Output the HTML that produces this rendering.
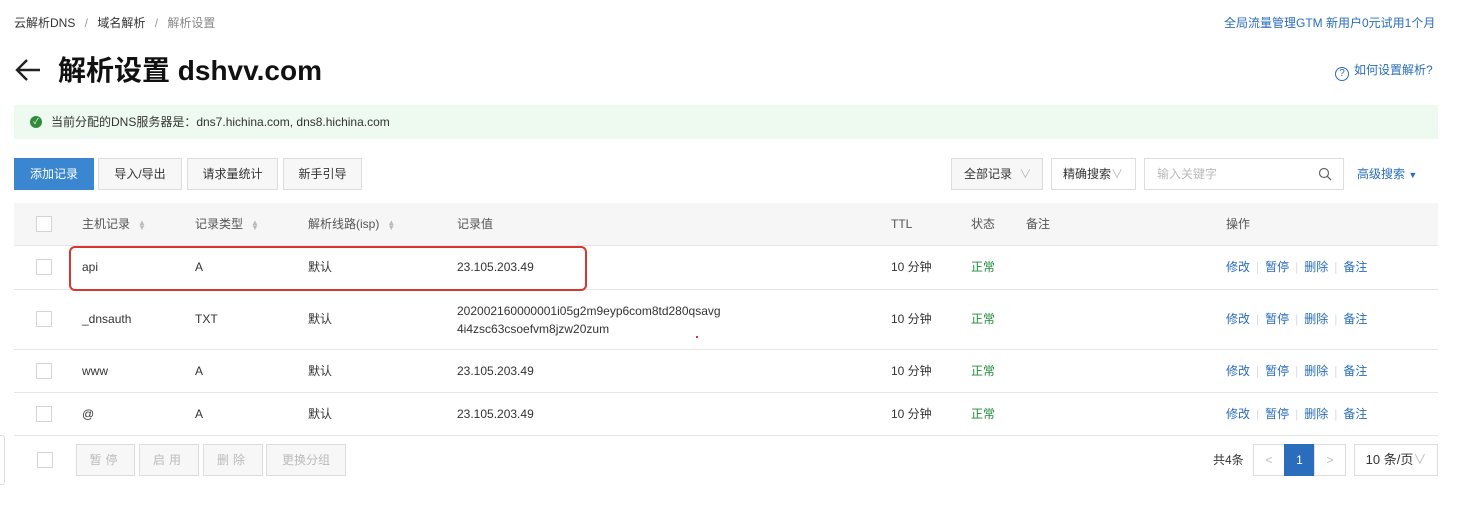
<!DOCTYPE html>
<html><head><meta charset="utf-8"><style>
*{margin:0;padding:0;box-sizing:border-box}
body{width:1461px;height:511px;background:#fff;position:relative;overflow:hidden;font-family:"Liberation Sans","Noto Sans CJK SC",sans-serif;font-size:12px;color:#333}
.a{position:absolute;white-space:nowrap;line-height:16px}
.blue{color:#2a6dbd}
.btn{position:absolute;border:1px solid #ddd;background:#f7f7f7;height:32px;line-height:30px;text-align:center;font-size:12px;color:#333}
.cb{position:absolute;width:16px;height:16px;border:1px solid #d5d5d5;background:#fff}
.line{position:absolute;left:14px;width:1424px;height:1px;background:#e5e5e5}
.t{position:absolute;font-size:12px;color:#333;white-space:nowrap;line-height:16px}
.g{color:#1f8c38}
.ops{position:absolute;left:1226px;color:#2a6dbd;font-size:12px;white-space:nowrap;line-height:16px}
.ops i{font-style:normal;color:#ddd;margin:0 6px}
.sort{display:inline-block;margin-left:8px;color:#bbb;font-size:8px;line-height:5px;vertical-align:middle}
</style></head><body>
<div class="a" style="left:14px;top:15px;color:#333">云解析DNS <span style="color:#999;margin:0 6px">/</span> 域名解析 <span style="color:#999;margin:0 6px">/</span> <span style="color:#888">解析设置</span></div>
<div class="a blue" style="left:1224px;top:15px">全局流量管理GTM 新用户0元试用1个月</div>
<svg class="a" style="left:14px;top:57px" width="28" height="26" viewBox="0 0 28 26"><path d="M26 13H3M13 3L3 13l10 10" fill="none" stroke="#222" stroke-width="2.4"/></svg>
<div class="a" style="left:58px;top:54px;font-size:28px;line-height:34px;font-weight:bold;color:#111">解析设置 dshvv.com</div>
<div class="a blue" style="left:1335px;top:62px"><span style="display:inline-block;width:14px;height:14px;border:1px solid #2a6dbd;border-radius:50%;font-size:10px;line-height:12px;text-align:center;margin-right:5px;vertical-align:-2px">?</span>如何设置解析?</div>
<div class="a" style="left:14px;top:105px;width:1424px;height:34px;background:#eefaef"></div>
<div class="a" style="left:30px;top:116px;width:12px;height:12px;border-radius:50%;background:#2f8a3a;color:#fff;font-size:8px;line-height:12px;text-align:center">✓</div>
<div class="a" style="left:51px;top:114px;color:#333">当前分配的DNS服务器是：dns7.hichina.com, dns8.hichina.com</div>
<div class="btn" style="left:14px;top:158px;width:80px;background:#3a86d0;border-color:#3a86d0;color:#fff">添加记录</div>
<div class="btn" style="left:98px;top:158px;width:84px">导入/导出</div>
<div class="btn" style="left:187px;top:158px;width:91px">请求量统计</div>
<div class="btn" style="left:283px;top:158px;width:79px">新手引导</div>
<div class="btn" style="left:951px;top:158px;width:92px;text-align:left;padding-left:12px">全部记录 <span style="color:#bbb;margin-left:4px">∨</span></div>
<div class="btn" style="left:1051px;top:158px;width:85px;background:#fff;text-align:left;padding-left:11px">精确搜索<span style="color:#bbb">∨</span></div>
<div class="btn" style="left:1144px;top:158px;width:200px;background:#fff;text-align:left;padding-left:12px;color:#bbb">输入关键字</div>
<svg class="a" style="left:1318px;top:167px" width="14" height="14" viewBox="0 0 14 14"><circle cx="6" cy="6" r="4.5" fill="none" stroke="#666" stroke-width="1.2"/><path d="M9.3 9.3L13 13" stroke="#666" stroke-width="1.3"/></svg>
<div class="a blue" style="left:1357px;top:166px">高级搜索 <span style="font-size:9px">▼</span></div>
<div class="a" style="left:14px;top:203px;width:1424px;height:42px;background:#f6f6f6"></div>
<div class="cb" style="left:36px;top:216px"></div>
<div class="t" style="left:82px;top:216px;color:#555">主机记录<span class="sort">▲<br>▼</span></div>
<div class="t" style="left:195px;top:216px;color:#555">记录类型<span class="sort">▲<br>▼</span></div>
<div class="t" style="left:308px;top:216px;color:#555">解析线路(isp)<span class="sort">▲<br>▼</span></div>
<div class="t" style="left:457px;top:216px;color:#555">记录值</div>
<div class="t" style="left:891px;top:216px;color:#555">TTL</div>
<div class="t" style="left:971px;top:216px;color:#555">状态</div>
<div class="t" style="left:1026px;top:216px;color:#555">备注</div>
<div class="t" style="left:1226px;top:216px;color:#555">操作</div>
<div class="line" style="top:245px"></div>
<div class="line" style="top:289px"></div>
<div class="line" style="top:349px"></div>
<div class="line" style="top:392px"></div>
<div class="line" style="top:435px"></div>

<div class="cb" style="left:36px;top:259px"></div>
<div class="t" style="left:82px;top:259px">api</div><div class="t" style="left:195px;top:259px">A</div><div class="t" style="left:308px;top:259px">默认</div><div class="t" style="left:457px;top:259px">23.105.203.49</div><div class="t" style="left:891px;top:259px">10 分钟</div><div class="t g" style="left:971px;top:259px">正常</div>
<div class="ops" style="top:259px">修改<i>|</i>暂停<i>|</i>删除<i>|</i>备注</div>

<div class="cb" style="left:36px;top:311px"></div>
<div class="t" style="left:82px;top:311px">_dnsauth</div><div class="t" style="left:195px;top:311px">TXT</div><div class="t" style="left:308px;top:311px">默认</div><div class="t" style="left:457px;top:302px;line-height:18px">202002160000001i05g2m9eyp6com8td280qsavg<br>4i4zsc63csoefvm8jzw20zum</div><div class="t" style="left:891px;top:311px">10 分钟</div><div class="t g" style="left:971px;top:311px">正常</div>
<div class="ops" style="top:311px">修改<i>|</i>暂停<i>|</i>删除<i>|</i>备注</div>

<div class="cb" style="left:36px;top:363px"></div>
<div class="t" style="left:82px;top:363px">www</div><div class="t" style="left:195px;top:363px">A</div><div class="t" style="left:308px;top:363px">默认</div><div class="t" style="left:457px;top:363px">23.105.203.49</div><div class="t" style="left:891px;top:363px">10 分钟</div><div class="t g" style="left:971px;top:363px">正常</div>
<div class="ops" style="top:363px">修改<i>|</i>暂停<i>|</i>删除<i>|</i>备注</div>

<div class="cb" style="left:36px;top:406px"></div>
<div class="t" style="left:82px;top:406px">@</div><div class="t" style="left:195px;top:406px">A</div><div class="t" style="left:308px;top:406px">默认</div><div class="t" style="left:457px;top:406px">23.105.203.49</div><div class="t" style="left:891px;top:406px">10 分钟</div><div class="t g" style="left:971px;top:406px">正常</div>
<div class="ops" style="top:406px">修改<i>|</i>暂停<i>|</i>删除<i>|</i>备注</div>

<div class="a" style="left:69px;top:246px;width:518px;height:45px;border:2px solid #d9362f;border-radius:6px"></div>
<div class="a" style="left:696px;top:336px;width:2px;height:2px;background:#d9362f"></div>

<div class="cb" style="left:37px;top:452px"></div>
<div class="btn" style="left:76px;top:444px;width:59px;color:#bbb;letter-spacing:4px">暂停</div>
<div class="btn" style="left:139px;top:444px;width:60px;color:#bbb;letter-spacing:4px">启用</div>
<div class="btn" style="left:203px;top:444px;width:60px;color:#bbb;letter-spacing:4px">删除</div>
<div class="btn" style="left:266px;top:444px;width:80px;color:#bbb">更换分组</div>
<div class="a" style="left:0;top:435px;width:5px;height:50px;border:1px solid #ddd;border-left:none;border-radius:0 3px 3px 0"></div>
<div class="t" style="left:1213px;top:452px">共4条</div>
<div class="btn" style="left:1253px;top:444px;width:32px;background:#fff;color:#bbb">&lt;</div>
<div class="btn" style="left:1284px;top:444px;width:31px;background:#2a6dbd;border-color:#2a6dbd;color:#fff">1</div>
<div class="btn" style="left:1314px;top:444px;width:32px;background:#fff;color:#bbb">&gt;</div>
<div class="btn" style="left:1354px;top:444px;width:84px;background:#fff;font-size:13px">10 条/页<span style="color:#bbb">∨</span></div>
</body></html>
